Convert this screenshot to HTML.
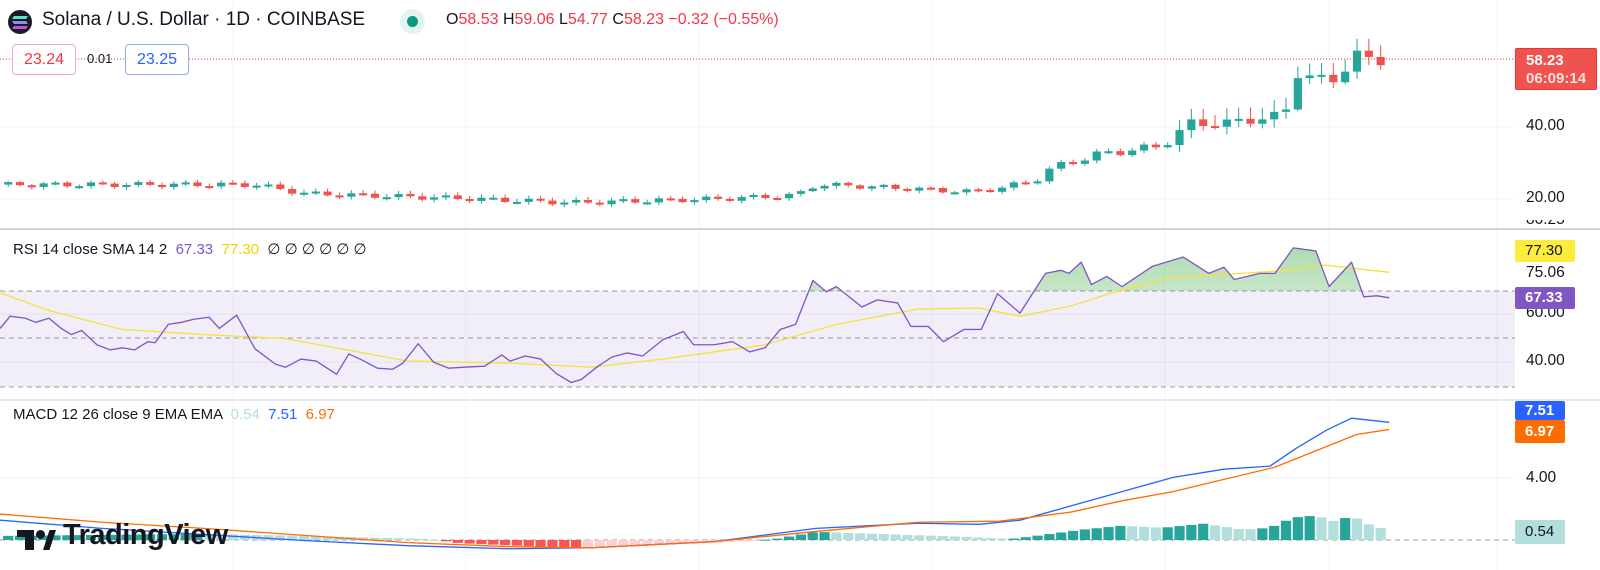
<!DOCTYPE html>
<html><head><meta charset="utf-8"><style>
html,body{margin:0;padding:0;background:#fff;width:1600px;height:570px;overflow:hidden;font-family:"Liberation Sans",Arial,sans-serif;}
#c{position:absolute;left:0;top:0}
.t{position:absolute;white-space:nowrap;font-size:15px;color:#131722}
.ax{position:absolute;left:1526px;font-size:15.5px;color:#131722}
.lb{position:absolute;left:1515px;color:#fff;font-size:15px;font-weight:bold;padding-left:10px;box-sizing:border-box;border-radius:2px}
</style></head><body>
<svg id="c" width="1600" height="570" xmlns="http://www.w3.org/2000/svg">
<g id="grid"></g>
<g id="scaled" transform="scale(1.02)"></g>
<line x1="0" y1="229" x2="1600" y2="229" stroke="#d1d4dc" stroke-width="2"/>
<line x1="0" y1="400" x2="1600" y2="400" stroke="#e0e3eb" stroke-width="1.5"/>
<line x1="0" y1="59" x2="1515" y2="59" stroke="#f23645" stroke-width="1" stroke-dasharray="1,2"/>
</svg>

<div style="position:absolute;left:8px;top:10px;width:24px;height:24px;border-radius:50%;background:#1b1b25"></div>
<div style="position:absolute;left:13px;top:16px;width:14px;height:3px;background:#5be5c0;transform:skewX(-30deg)"></div>
<div style="position:absolute;left:13px;top:21px;width:14px;height:3px;background:#8f8ef0;transform:skewX(30deg)"></div>
<div style="position:absolute;left:13px;top:26px;width:14px;height:3px;background:#c44fe0;transform:skewX(-30deg)"></div>
<div class="t" style="left:42px;top:9px;font-size:19px;">Solana / U.S. Dollar · 1D · COINBASE</div>
<div style="position:absolute;left:400px;top:9px;width:25px;height:25px;border-radius:50%;background:#e3f3ef"></div>
<div style="position:absolute;left:407px;top:16px;width:11px;height:11px;border-radius:50%;background:#089981"></div>
<div class="t" style="left:446px;top:11px;font-size:16px;">O<span style="color:#f23645">58.53</span> H<span style="color:#f23645">59.06</span> L<span style="color:#f23645">54.77</span> C<span style="color:#f23645">58.23 −0.32 (−0.55%)</span></div>
<div style="position:absolute;left:12px;top:44px;width:62px;height:29px;border:1px solid #f7a9b0;border-radius:4px;background:#fff;color:#f23645;font-size:16px;text-align:center;line-height:29px">23.24</div>
<div class="t" style="left:87px;top:51px;font-size:13px">0.01</div>
<div style="position:absolute;left:125px;top:44px;width:62px;height:29px;border:1px solid #8fa9f7;border-radius:4px;background:#fff;color:#2962ff;font-size:16px;text-align:center;line-height:29px">23.25</div>

<div class="lb" style="top:48px;width:82px;height:42px;background:#ef5350;line-height:18px;padding-top:3px;border:1px solid #e33">58.23<br><span style="color:#fde0df">06:09:14</span></div>
<div class="ax" style="top:117px">40.00</div>
<div class="ax" style="top:189px">20.00</div>
<div class="ax" style="top:220px;height:9px;overflow:hidden;line-height:0">80.25</div>
<div class="lb" style="top:240px;width:60px;height:22px;line-height:22px;background:#ffeb3b;color:#131722;font-weight:normal">77.30</div>
<div class="ax" style="top:264px">75.06</div>
<div class="ax" style="top:304px">60.00</div>
<div class="lb" style="top:287px;width:60px;height:22px;line-height:22px;background:#7e57c2">67.33</div>
<div class="ax" style="top:352px">40.00</div>
<div class="lb" style="top:401px;width:50px;height:19px;line-height:19px;background:#2962ff">7.51</div>
<div class="lb" style="top:420px;width:50px;height:23px;line-height:23px;background:#ff6d00">6.97</div>
<div class="ax" style="top:469px">4.00</div>
<div class="lb" style="top:520px;width:50px;height:24px;line-height:24px;background:#b2dfdb;color:#131722;font-weight:normal">0.54</div>

<div class="t" style="left:13px;top:240px;">RSI 14 close SMA 14 2 <span style="color:#7e57c2">&nbsp;67.33</span> <span style="color:#f0d400">&nbsp;77.30</span> &nbsp;∅ ∅ ∅ ∅ ∅ ∅</div>
<div class="t" style="left:13px;top:406px;">MACD 12 26 close 9 EMA EMA <span style="color:#b2dfdb">&nbsp;0.54</span> <span style="color:#2962ff">&nbsp;7.51</span> <span style="color:#ff6d00">&nbsp;6.97</span></div>

<div style="position:absolute;left:17px;top:530px;width:17px;height:7px;background:#131722"></div>
<div style="position:absolute;left:25px;top:530px;width:9px;height:20px;background:#131722"></div>
<div style="position:absolute;left:36px;top:530px;width:9px;height:9px;border-radius:50%;background:#131722"></div>
<div style="position:absolute;left:43px;top:530px;width:13px;height:20px;background:#131722;clip-path:polygon(50% 0,100% 0,50% 100%,0 100%)"></div>
<div class="t" style="left:63px;top:519px;font-size:29px;font-weight:bold;letter-spacing:-0.5px">TradingView</div>

<script>
var NS="http://www.w3.org/2000/svg";
function el(p,n,a){var e=document.createElementNS(NS,n);for(var k in a)e.setAttribute(k,a[k]);p.appendChild(e);return e;}
var g=document.getElementById('grid'),S=document.getElementById('scaled');
[127,199,59].forEach(function(y){el(g,'line',{x1:0,x2:1515,y1:y,y2:y,stroke:'#f0f3fa'})});
[314,362,478].forEach(function(y){el(g,'line',{x1:0,x2:1515,y1:y,y2:y,stroke:'#f0f3fa'})});
[233,466,699,932,1165,1329,1497].forEach(function(x){el(g,'line',{x1:x,x2:x,y1:0,y2:570,stroke:'#f3f4f8'})});
el(g,'rect',{x:0,y:291,width:1515,height:96,fill:'#7e57c2','fill-opacity':0.1});
[291,338,387].forEach(function(y){el(g,'line',{x1:0,x2:1515,y1:y,y2:y,stroke:'#9598a1','stroke-dasharray':'5,4'})});
el(g,'line',{x1:0,x2:1515,y1:540,y2:540,stroke:'#9598a1','stroke-dasharray':'5,4'});
function interp(k,x){for(var i=0;i<k.length-1;i++){if(x<=k[i+1][0]){var t=(x-k[i][0])/(k[i+1][0]-k[i][0]);return k[i][1]+t*(k[i+1][1]-k[i][1]);}}return k[k.length-1][1];}
var pk=[[0,24],[250,24],[300,21.5],[450,20.2],[560,19],[700,20],[780,21],[800,24],[850,23.5],[950,22],[980,23],[1010,25],[1030,28],[1055,31],[1100,33.5],[1130,34],[1150,37],[1165,41],[1200,41],[1250,43],[1262,45],[1270,55],[1300,53],[1315,53],[1325,62],[1335,59],[1350,58.2]];
function py(p){return (127-(p-40)*3.6)/1.02;}
var prev=24,sp=11.6,n=0;
for(var x=8;x<=1362;x+=sp){n++;var c=interp(pk,x)+Math.sin(n*1.7)*0.7*(x>1000?1.8:1);var o=prev;var up=c>=o;var col=up?'#26a69a':'#ef5350';
var hi=Math.max(o,c)+0.3+Math.abs(Math.sin(n*3.1))*(x>1150?3:0.6),lo=Math.min(o,c)-0.3-Math.abs(Math.cos(n*2.3))*(x>1150?2:0.5);
el(S,'line',{x1:x,x2:x,y1:py(hi),y2:py(lo),stroke:col,'stroke-width':1});
var h=Math.max(Math.abs(py(o)-py(c)),2);el(S,'rect',{x:x-4,y:Math.min(py(o),py(c)),width:8,height:h,fill:col});prev=c;}
function pl(p,pts,col,w){el(p,'polyline',{points:pts.map(function(q){return q[0]+','+q[1]}).join(' '),fill:'none',stroke:col,'stroke-width':w||1.3,'stroke-linejoin':'round'})}
var rsi=[[0,322],[10,310],[25,312],[35,316],[48,312],[60,322],[70,328],[80,324],[95,338],[108,343],[120,341],[132,343],[145,335],[152,336],[165,318],[178,316],[190,313],[205,311],[215,322],[232,309],[250,342],[270,357],[280,360],[295,352],[310,354],[330,367],[342,347],[355,353],[370,361],[385,362],[395,356],[410,337],[425,355],[440,361],[455,360],[475,359],[492,348],[500,354],[515,349],[530,352],[545,366],[560,375],[570,372],[585,360],[600,350],[615,346],[630,349],[650,333],[670,325],[680,338],[700,338],[718,335],[725,339],[735,345],[750,341],[765,323],[780,318],[797,275],[810,286],[820,281],[845,301],[860,294],[880,297],[893,320],[910,320],[925,335],[945,323],[962,323],[978,288],[1000,307],[1025,268],[1040,265],[1048,268],[1060,257],[1070,279],[1085,271],[1100,281],[1130,261],[1160,252],[1185,268],[1200,262],[1210,274],[1235,268],[1250,268],[1268,243],[1290,246],[1303,281],[1325,257],[1337,291],[1350,290],[1362,292]];
var lim=291/1.02;
var defs=el(S,'defs',{});var lg=el(defs,'linearGradient',{id:'gg',x1:0,y1:0,x2:0,y2:1});el(lg,'stop',{offset:0,'stop-color':'#4caf50','stop-opacity':0.45});el(lg,'stop',{offset:1,'stop-color':'#4caf50','stop-opacity':0.02});
var cp=el(defs,'clipPath',{id:'cl'});el(cp,'rect',{x:0,y:0,width:1600,height:lim});
el(S,'polygon',{points:'0,'+lim+' '+rsi.map(function(q){return q[0]+','+q[1]}).join(' ')+' 1362,'+lim,fill:'url(#gg)','clip-path':'url(#cl)'});
pl(S,[[0,287],[50,305],[120,323],[200,328],[280,332],[400,354],[500,356],[580,360],[650,352],[750,338],[820,318],[900,303],[960,302],[1000,310],[1050,300],[1100,284],[1150,272],[1200,269],[1250,266],[1300,260],[1362,267]],'#f5e23a',1.3);
pl(S,rsi,'#7e57c2',1.3);
var z=540/1.02,hk=[[0,4],[200,6],[300,4],[420,1],[450,-3],[560,-8],[600,-6],[700,-3],[760,1],[800,8],[950,3],[990,1],[1000,2],[1060,10],[1100,14],[1140,12],[1180,16],[1220,10],[1245,12],[1268,22],[1290,24],[1310,18],[1325,24],[1340,16],[1362,9]];
n=0;for(var x=8;x<=1362;x+=sp){n++;var v=interp(hk,x);var prevv=interp(hk,x-sp);var col;if(v>=0)col=(v>=prevv)?'#26a69a':'#b2dfdb';else col=(v<=prevv)?'#ff5252':'#ffcdd2';
el(S,'rect',{x:x-5,y:Math.min(z,z-v),width:10,height:Math.max(Math.abs(v),1),fill:col});}
pl(S,[[0,510],[100,518],[200,524],[300,530],[400,535],[500,538],[580,537],[700,531],[800,518],[900,513],[960,514],[1000,510],[1050,496],[1100,482],[1150,468],[1200,460],[1245,457],[1270,440],[1300,422],[1325,410],[1362,414]],'#2962ff',1.3);
pl(S,[[0,504],[100,512],[200,518],[300,525],[400,532],[500,536],[580,537],[700,531],[800,521],[900,512],[980,511],[1050,502],[1100,491],[1150,482],[1200,470],[1250,458],[1300,438],[1330,426],[1362,421]],'#ff6d00',1.3);
</script>
</body></html>
